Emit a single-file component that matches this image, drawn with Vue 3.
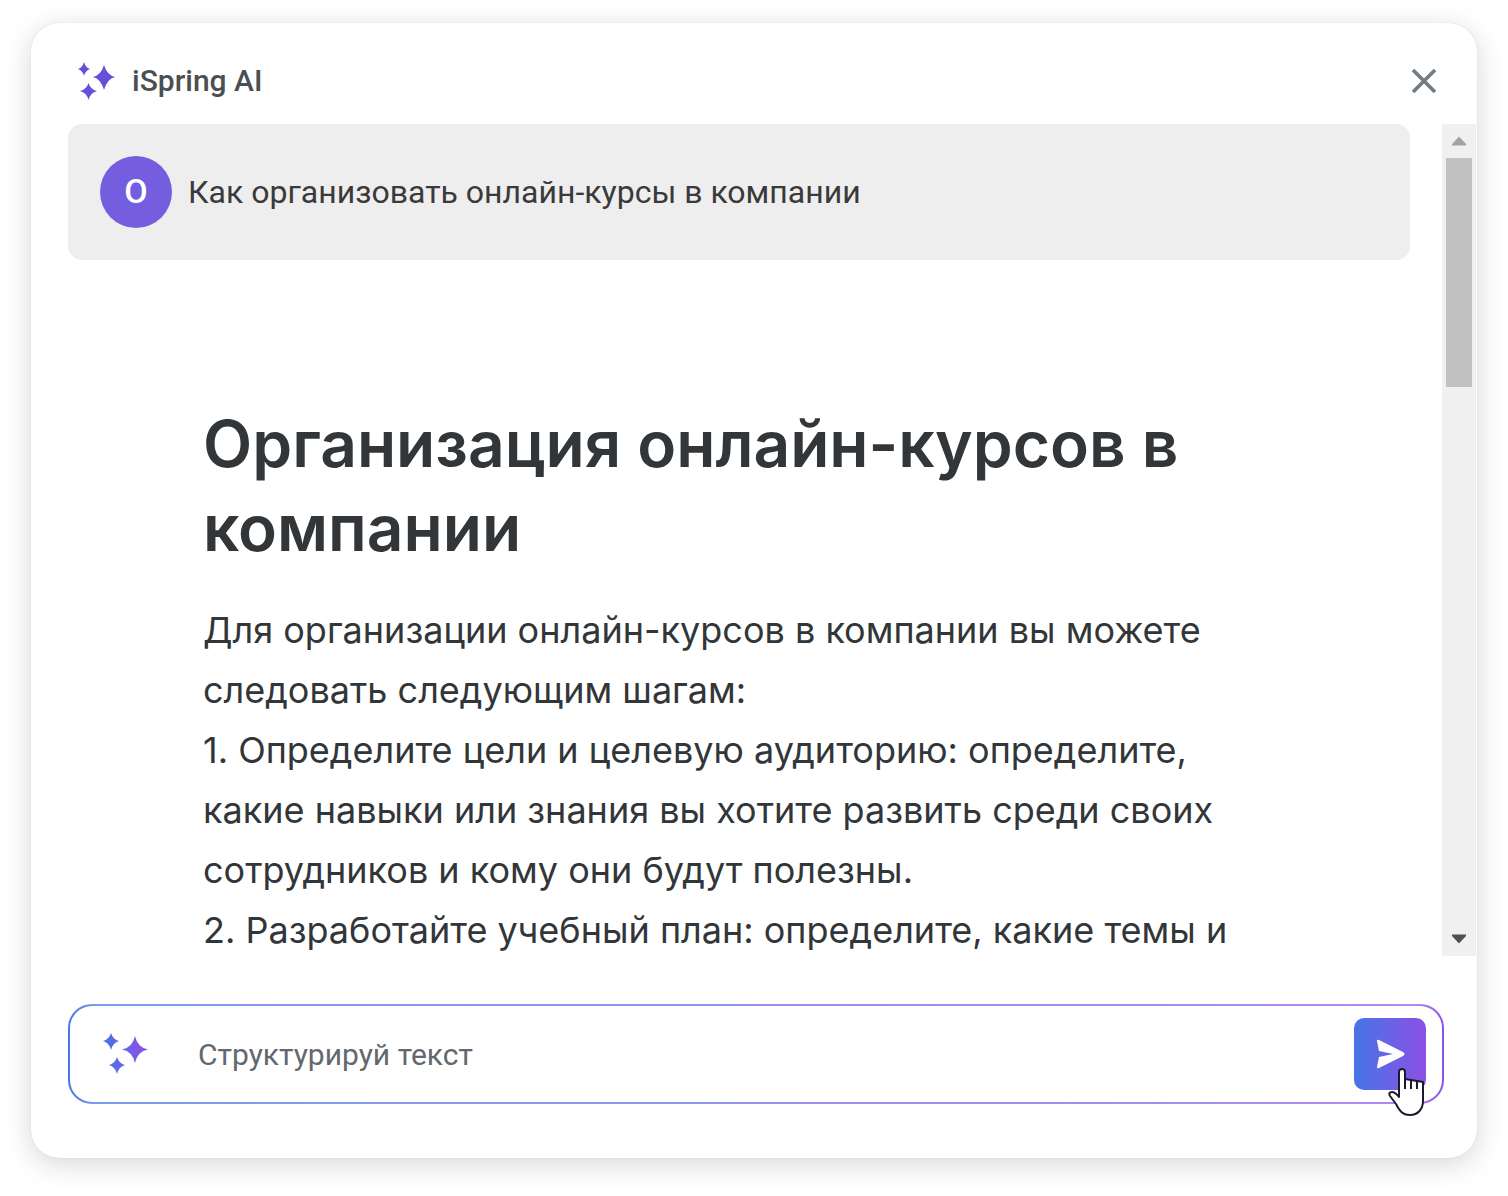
<script setup>
import { ref } from 'vue'

const question = 'Как организовать онлайн-курсы в компании'
const intro = 'Для организации онлайн-курсов в компании вы можете следовать следующим шагам:'
const steps = [
  '1. Определите цели и целевую аудиторию: определите, какие навыки или знания вы хотите развить среди своих сотрудников и кому они будут полезны.',
  '2. Разработайте учебный план: определите, какие темы и'
]
const prompt = ref('Структурируй текст')
</script>

<template>
  <main class="page">
    <section class="dialog">
      <header class="top">
        <svg class="logo" width="38" height="40" viewBox="0 0 38 40" fill="#6650da" aria-hidden="true">
          <path d="M6 1Q7.500 6.500 12 8Q7.500 9.500 6 15Q4.500 9.500 0 8Q4.500 6.500 6 1Z" />
          <path d="M26 4Q29 14 37 16Q29 18 26 29Q23 18 15 16Q23 14 26 4Z" />
          <path d="M10.500 22Q12.500 28.500 19 30Q12.500 31.500 10.500 39Q8.500 31.500 2 30Q8.500 28.500 10.500 22Z" />
        </svg>
        <span class="name">iSpring AI</span>
        <button class="close" type="button" aria-label="Закрыть">
          <svg width="26" height="26" viewBox="0 0 26 26" fill="none" stroke="#737b82" stroke-width="3.600"><path d="M2 2L24 24M24 2L2 24" /></svg>
        </button>
      </header>

      <div class="body">
        <div class="chat">
          <div class="question">
            <span class="avatar">О</span>
            <span>{{ question }}</span>
          </div>
          <article class="answer">
            <h1>Организация онлайн-курсов в компании</h1>
            <p>{{ intro }}</p>
            <p v-for="step in steps" :key="step">{{ step }}</p>
          </article>
        </div>
        <div class="scrollbar">
          <button type="button" aria-label="Вверх">
            <svg width="14" height="10" viewBox="0 0 14 10" fill="#a3a3a3"><path d="M0 9.500V8L7 0.500L14 8V9.500Z" /></svg>
          </button>
          <div class="track"><div class="thumb"></div></div>
          <button type="button" aria-label="Вниз">
            <svg width="14" height="10" viewBox="0 0 14 10" fill="#505050"><path d="M0 0.500V2L7 9.500L14 2V0.500Z" /></svg>
          </button>
        </div>
      </div>

      <form class="composer" @submit.prevent>
        <svg class="spark" width="48" height="44" viewBox="0 0 48 44" aria-hidden="true">
          <defs>
            <linearGradient id="sparkFill" gradientUnits="userSpaceOnUse" x1="0" y1="0" x2="44" y2="0">
              <stop offset="0" stop-color="#4775e5" />
              <stop offset="1" stop-color="#8b50e8" />
            </linearGradient>
          </defs>
          <g fill="url(#sparkFill)">
            <path d="M9 1Q11 7.500 17 9Q11 10.500 9 18Q7 10.500 1 9Q7 7.500 9 1Z" />
            <path d="M33 4Q35.500 15.500 46 17.500Q35.500 19.500 33 31Q30.500 19.500 20 17.500Q30.500 15.500 33 4Z" />
            <path d="M15 25Q17 31.500 23 33Q17 34.500 15 42Q13 34.500 7 33Q13 31.500 15 25Z" />
          </g>
        </svg>
        <input v-model="prompt" type="text" aria-label="Запрос" />
        <button class="send" type="submit" aria-label="Отправить">
          <svg width="30" height="30" viewBox="0 0 30 30" fill="#fff"><path d="M2 2Q2 0 4 1L28 13Q31 15 28 17L4 29Q2 30 2 28L4 18L18 15L4 12Z" /></svg>
        </button>
        <svg class="cursor" width="38" height="50" viewBox="0 0 38 50" aria-hidden="true">
          <path d="M11 30V5Q11 2 14 2Q17 2 17 5V12L35 15V34C35 42 30 48 22 48C14 48 11 43 8 37L2 29Q0 25 4 25Q7 25 11 30Z" fill="#fff" stroke="#1b1b2b" stroke-width="2" stroke-linejoin="round" />
          <path d="M17 11V22M23 13V22M29 14V22" stroke="#1b1b2b" stroke-width="2" />
        </svg>
      </form>
    </section>
  </main>
</template>

<style>
body {
  margin: 0;
  background: #fff;
}
</style>

<style scoped>
.page {
  box-sizing: border-box;
  height: 100vh;
  padding: 23px 31px 38px;
  display: flex;
  font-family: Roboto, sans-serif;
}
.dialog {
  flex: 1;
  min-width: 0;
  display: flex;
  flex-direction: column;
  border-radius: 28px;
  background: #fff;
  box-shadow: 0 0 1px rgba(0, 0, 0, 0.2), 0 6px 28px rgba(0, 0, 0, 0.16);
}
button {
  padding: 0;
  border: 0;
  background: none;
  display: flex;
  align-items: center;
  justify-content: center;
}
.top {
  height: 101px;
  padding: 14px 40px 0 47px;
  box-sizing: border-box;
  display: flex;
  align-items: center;
}
.name {
  flex: 1;
  margin-left: 16px;
  font-size: 30px;
  line-height: 40px;
  font-weight: 500;
  color: #4b4f52;
}
.body {
  flex: 1;
  min-height: 0;
  display: flex;
}
.chat {
  flex: 1;
  min-width: 0;
  padding: 0 32px 0 37px;
  overflow: hidden;
}
.question {
  display: flex;
  align-items: center;
  gap: 16px;
  padding: 32px;
  border-radius: 14px;
  background: #eee;
  font-size: 32px;
  line-height: 40px;
  color: #3a3a3a;
}
.avatar {
  width: 72px;
  height: 72px;
  flex: none;
  border-radius: 50%;
  background: #745ddf;
  color: #fff;
  font: 500 34px/70px Roboto, sans-serif;
  text-align: center;
}
.answer {
  padding: 142px 135px 0;
  font-family: Inter, sans-serif;
  color: #323639;
}
.answer h1 {
  margin: 0 0 30px;
  font-size: 64px;
  line-height: 84px;
  font-weight: 600;
}
.answer p {
  margin: 0;
  font-size: 36px;
  line-height: 60px;
}
.scrollbar {
  width: 34px;
  margin-right: 1px;
  display: flex;
  flex-direction: column;
  background: #f0f0f0;
}
.scrollbar button {
  height: 34px;
}
.track {
  flex: 1;
  padding: 0 4px;
}
.thumb {
  height: 30%;
  background: #c1c1c1;
}
.composer {
  position: relative;
  height: 100px;
  box-sizing: border-box;
  margin: 48px 33px 54px 37px;
  padding: 0 16px 0 32px;
  display: flex;
  align-items: center;
  border: 2px solid transparent;
  border-radius: 24px;
  background: linear-gradient(#fff, #fff) padding-box, linear-gradient(90deg, #4775e5, #7a9bee 2%, #b08af0 98%, #8b50e4) border-box;
}
.composer input {
  flex: 1;
  min-width: 0;
  margin-left: 48px;
  padding: 2px 0 0;
  border: 0;
  outline: 0;
  background: none;
  font: 30px/40px Roboto, sans-serif;
  color: #62686d;
}
.send {
  width: 72px;
  height: 72px;
  border-radius: 10px;
  background: linear-gradient(90deg, #4775e5, #8b50e4);
}
.cursor {
  position: absolute;
  right: 16px;
  bottom: -15px;
}
</style>
